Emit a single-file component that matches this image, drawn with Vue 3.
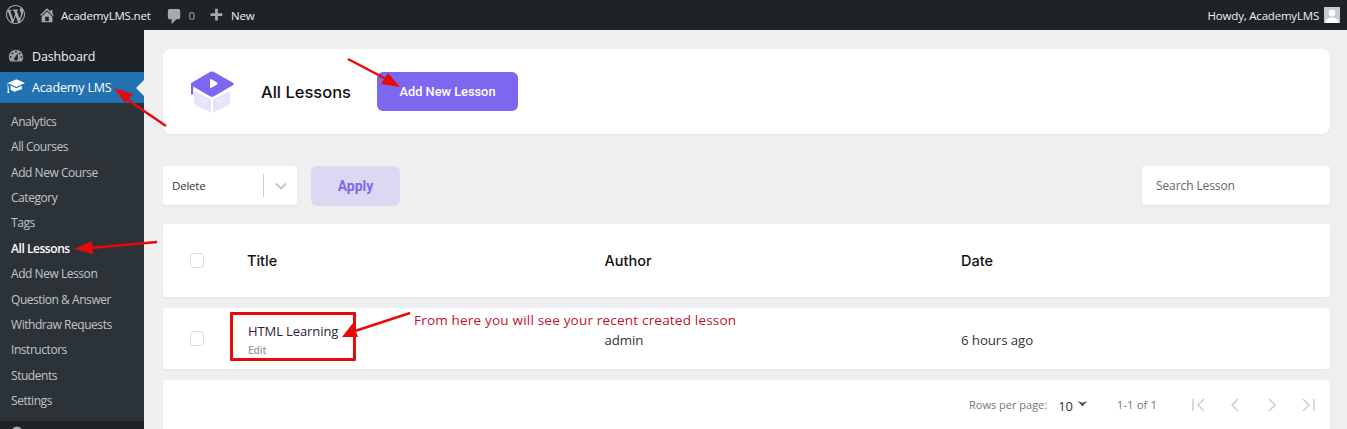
<script setup>
const subItems = [
  { label: 'Analytics' },
  { label: 'All Courses' },
  { label: 'Add New Course' },
  { label: 'Category' },
  { label: 'Tags' },
  { label: 'All Lessons', current: true },
  { label: 'Add New Lesson' },
  { label: 'Question & Answer' },
  { label: 'Withdraw Requests' },
  { label: 'Instructors' },
  { label: 'Students' },
  { label: 'Settings' }
]
</script>

<template>
  <div class="page">
    <header class="bar">
      <svg class="wp" viewBox="0 0 20 20"><path fill="#a7aaad" d="M20 10c0-5.51-4.49-10-10-10C4.48 0 0 4.49 0 10c0 5.52 4.48 10 10 10 5.51 0 10-4.48 10-10zM7.78 15.37L4.37 6.22c.55-.02 1.17-.08 1.17-.08.5-.06.44-1.13-.06-1.11 0 0-1.45.11-2.37.11-.18 0-.37 0-.58-.01C4.12 2.69 6.87 1.11 10 1.11c2.33 0 4.45.87 6.05 2.34-.68-.11-1.65.39-1.65 1.58 0 .74.45 1.36.9 2.1.35.61.55 1.36.55 2.46 0 1.49-1.4 5-1.4 5l-3.03-8.37c.54-.02.82-.17.82-.17.5-.05.44-1.25-.06-1.22 0 0-1.44.12-2.38.12-.87 0-2.33-.12-2.33-.12-.5-.03-.56 1.2-.06 1.22l.92.08 1.26 3.41zM17.41 10c.24-.64.74-1.87.43-4.25.7 1.29 1.05 2.71 1.05 4.25 0 3.29-1.73 6.24-4.4 7.78.97-2.59 1.94-5.2 2.92-7.78zM6.1 18.09C3.12 16.65 1.11 13.53 1.11 10c0-1.3.23-2.48.72-3.59C3.25 10.3 4.67 14.2 6.1 18.09zm4.03-6.63l2.58 6.98c-.86.29-1.76.45-2.71.45-.79 0-1.57-.11-2.29-.33.81-2.38 1.62-4.74 2.42-7.1z"/></svg>
      <svg class="home" viewBox="0 0 20 20"><path fill="#a7aaad" d="M16 8.5l1.53 1.53-1.06 1.06L10 4.62l-6.47 6.47-1.06-1.06L10 2.5l4 4v-2h2v4zm-6-2.46l6 5.99V18H4v-5.97zM12 17v-5H8v5h4z"/></svg>
      <span class="site">AcademyLMS.net</span>
      <svg class="bubble" viewBox="0 0 20 20"><path fill="#a7aaad" d="M5 2h9c1.1 0 2 .9 2 2v7c0 1.1-.9 2-2 2h-2l-5 5v-5H5c-1.100 0-2-.9-2-2V4c0-1.100.9-2 2-2z"/></svg>
      <span class="count">0</span>
      <svg class="plus" viewBox="0 0 20 20"><path fill="#a7aaad" d="M17 7v3h-5v5H9v-5H4V7h5V2h3v5h5z"/></svg>
      <span class="new">New</span>
      <span class="howdy">Howdy, AcademyLMS</span>
      <span class="avatar">
        <svg viewBox="0 0 16 16"><rect width="16" height="16" fill="#c9c9c9"/><circle cx="8" cy="6" r="3.4" fill="#fff"/><path fill="#fff" d="M1.500 16c.3-3.600 3-5.500 6.500-5.500s6.200 1.900 6.500 5.500z"/></svg>
      </span>
    </header>

    <div class="layout">
      <aside class="side">
        <div class="menu-row">
          <svg class="menu-icon" viewBox="0 0 20 20"><path fill="#9b9ea1" fill-rule="evenodd" d="M3.760 16h12.480c1.100-1.370 1.760-3.110 1.760-5 0-4.420-3.580-8-8-8s-8 3.580-8 8c0 1.890.66 3.630 1.760 5zM10 4c.55 0 1 .45 1 1s-.45 1-1 1-1-.45-1-1 .45-1 1-1zM6 6c.55 0 1 .45 1 1s-.45 1-1 1-1-.45-1-1 .45-1 1-1zm8 0c.55 0 1 .45 1 1s-.45 1-1 1-1-.45-1-1 .45-1 1-1zm-5.370 5.550L12 7v6c0 1.100-.9 2-2 2s-2-.9-2-2c0-.57.24-1.080.63-1.450zM4 10c.55 0 1 .45 1 1s-.45 1-1 1-1-.45-1-1 .45-1 1-1zm12 0c.55 0 1 .45 1 1s-.45 1-1 1-1-.45-1-1 .45-1 1-1z"/></svg>
          <span>Dashboard</span>
        </div>
        <div class="menu-row active">
          <svg class="menu-icon" viewBox="0 0 20 20"><path fill="#fff" d="M10.500 1.500 20 5.500 10.500 10 1.200 5.800V7.200L2.200 13.500 2.700 16.800H.300L.8 13.500 .7 5.500z"/><path fill="#fff" d="M4 8.300 10.500 11.300 16.500 8.500 16.500 12.500C14 13 11 14 8.500 15.500 7 14 5.500 13.500 4 13.200z"/></svg>
          <span>Academy LMS</span>
          <i class="notch"></i>
        </div>
        <nav class="sub">
          <a v-for="item in subItems" :key="item.label" :class="{ current: item.current }">{{ item.label }}</a>
        </nav>
        <svg class="next-icon" viewBox="0 0 12 12"><circle cx="6" cy="6" r="5.500" fill="#a7aaad"/></svg>
      </aside>

      <main class="main">
        <section class="card hero">
          <svg class="logo" viewBox="0 0 44 42">
            <path fill="#e6e2fc" d="M4 20 21 28.500V41.500L6 34.500Q4 33.500 4 31.500z"/>
            <path fill="#e6e2fc" d="M40 20 23 28.500V41.500L38 34.500Q40 33.500 40 31.500z"/>
            <path fill="#7c68ee" d="M20.500 .8Q22 0 23.500 .8L43 11.800Q44.500 13 43 14.200L23.500 25.500Q22 26.200 20.500 25.500L3.200 15.500V23.500H1V13.500Q.8 12.500 1.500 11.800z"/>
            <path fill="#fff" d="M20 9Q20 7.600 21.300 8.300L27 11.500Q28 12.500 27 13.500L21.300 16.700Q20 17.400 20 16z"/>
            <path stroke="#f4f2fe" stroke-width="1" d="M10 27 17 30.500M10 30 17 33.500M27 30.500 34 27M27 33.500 34 30"/>
          </svg>
          <h1>All Lessons</h1>
          <button class="primary">Add New Lesson</button>
        </section>

        <section class="tools">
          <div class="select">
            <span class="sel-label">Delete</span>
            <i class="sep"></i>
            <svg class="chev" viewBox="0 0 12 8"><path d="M1 1.500 6 6.500 11 1.500" fill="none" stroke="#c4c4c4" stroke-width="1.800"/></svg>
          </div>
          <button class="apply">Apply</button>
          <div class="search">Search Lesson</div>
        </section>

        <section class="card thead">
          <span class="check"></span>
          <span class="c-title">Title</span>
          <span class="c-author">Author</span>
          <span class="c-date">Date</span>
        </section>

        <section class="card trow">
          <span class="check"></span>
          <div class="c-title cell">
            <span class="lesson">HTML Learning</span>
            <span class="edit">Edit</span>
          </div>
          <span class="c-author val">admin</span>
          <span class="c-date val">6 hours ago</span>
        </section>

        <section class="card foot">
          <span class="rows">Rows per page:</span>
          <span class="num">10</span>
          <svg class="caret" viewBox="0 0 10 6"><path d="M0 0 5 5.500 10 0 5 1.800z" fill="#555"/></svg>
          <span class="range">1-1 of 1</span>
          <div class="pager">
            <svg viewBox="0 0 16 14"><path d="M2 1V13M13 1 7 7 13 13" fill="none" stroke="#d0d0d0" stroke-width="1.600"/></svg>
            <svg viewBox="0 0 16 14"><path d="M11 1 5 7 11 13" fill="none" stroke="#d0d0d0" stroke-width="1.600"/></svg>
            <svg viewBox="0 0 16 14"><path d="M5 1 11 7 5 13" fill="none" stroke="#d0d0d0" stroke-width="1.600"/></svg>
            <svg viewBox="0 0 16 14"><path d="M14 1V13M3 1 9 7 3 13" fill="none" stroke="#d0d0d0" stroke-width="1.600"/></svg>
          </div>
        </section>
      </main>
    </div>

    <div class="redbox"></div>
    <span class="note">From here you will see your recent created lesson</span>
    <svg class="arrows" viewBox="0 0 1347 429">
      <g fill="#e60a0a" stroke="#e60a0a">
        <path fill="none" stroke-width="2.500" d="M166 126 125 98"/>
        <path stroke="none" d="M114 88 133 94 125 103z"/>
        <path fill="none" stroke-width="2.500" d="M348 59 388 80"/>
        <path stroke="none" d="M400 87 381 84 388 73z"/>
        <path fill="none" stroke-width="2.500" d="M157 242 90 248"/>
        <path stroke="none" d="M74 249 92 241 93 254z"/>
        <path fill="none" stroke-width="2.500" d="M410 313 355 331"/>
        <path stroke="none" d="M342 337 353 323 358 337z"/>
      </g>
    </svg>
  </div>
</template>

<style>
html, body { margin: 0; background: #efeff1; }
</style>

<style scoped>
.page {
  position: relative;
  width: 1347px;
  height: 429px;
  overflow: hidden;
  background: #efeff1;
  font-family: "Open Sans", "Liberation Sans", sans-serif;
}
.bar {
  height: 30px;
  background: #1d2327;
  display: flex;
  align-items: center;
  padding: 0 6px;
  color: #f0f0f1;
  font-size: 11.500px;
  letter-spacing: -.2px;
}
.wp { width: 19px; height: 19px; margin-top: -1px; }
.home { width: 18px; height: 18px; margin-left: 13px; }
.site { margin-left: 5px; }
.bubble { width: 19px; height: 19px; margin-left: 14px; margin-top: 2px; }
.count { margin-left: 5px; color: #a7aaad; }
.plus { width: 18px; height: 18px; margin-left: 12px; margin-top: 2px; }
.new { margin-left: 6px; }
.howdy { margin-left: auto; }
.avatar { width: 16px; height: 16px; margin-left: 5px; margin-right: 1px; display: block; }
.avatar svg { display: block; width: 16px; height: 16px; }
.layout { display: flex; height: 399px; }
.side {
  width: 144px;
  flex: none;
  background: #1d2327;
  padding-top: 11px;
  box-sizing: border-box;
  display: flex;
  flex-direction: column;
}
.menu-row {
  height: 31px;
  flex: none;
  box-sizing: border-box;
  padding: 0 0 1px 7px;
  display: flex;
  align-items: center;
  color: #f0f0f1;
  font-size: 12.500px;
  position: relative;
  letter-spacing: -.15px;
}
.menu-row span { margin-left: 7px; }
.menu-icon { width: 18px; height: 18px; flex: none; }
.active { background: #2271b1; color: #fff; }
.notch {
  position: absolute;
  right: 0;
  top: 8px;
  border: 8px solid transparent;
  border-right-color: #efeff1;
  border-left-width: 0;
}
.sub {
  background: #2c3338;
  padding: 5.700px 0 0 11px;
  height: 318px;
  flex: none;
  box-sizing: border-box;
  display: flex;
  flex-direction: column;
}
.sub a {
  height: 25.400px;
  flex: none;
  display: flex;
  align-items: center;
  color: #c3c4c7;
  font-size: 12px;
  letter-spacing: -.45px;
  white-space: nowrap;
}
.sub a.current { color: #fff; font-weight: 600; }
.next-icon { width: 12px; height: 12px; flex: none; margin: 5px 0 0 11px; }
.main { flex: 1; padding: 19px 17px 0 19px; box-sizing: border-box; }
.card { background: #fff; box-shadow: 0 1px 2px rgba(0,0,0,.05); }
.hero {
  height: 85px;
  border-radius: 8px;
  display: flex;
  align-items: center;
  padding-left: 26px;
  box-sizing: border-box;
}
.logo { width: 44px; height: 42px; margin-left: 1px; flex: none; }
.hero h1 {
  margin: 0 0 0 27px;
  font-size: 16.500px;
  font-weight: 500;
  color: #111;
  letter-spacing: 0;
  font-family: Inter, "Open Sans", sans-serif;
}
.primary {
  margin-left: 26px;
  width: 141px;
  height: 39px;
  border: 0;
  border-radius: 6px;
  background: #7c68ee;
  color: #fff;
  font: 500 12.800px Roboto, sans-serif;
  padding: 0;
}
.tools { display: flex; align-items: flex-start; margin-top: 32px; height: 58px; }
.select {
  width: 134px;
  height: 39px;
  background: #fff;
  border-radius: 3px;
  display: flex;
  align-items: center;
  box-shadow: 0 1px 2px rgba(0,0,0,.05);
}
.sel-label { font-size: 11.500px; margin-left: 9px; color: #333; flex: 1; letter-spacing: -.2px; }
.sep { width: 1px; height: 23px; background: #ccc; }
.chev { width: 12px; height: 8px; margin: 0 10px 0 11px; }
.apply {
  margin-left: 14px;
  width: 89px;
  height: 40px;
  border: 0;
  border-radius: 6px;
  background: #dcd8f2;
  color: #7c68ee;
  font: 700 14px Roboto, sans-serif;
  padding: 0;
}
.search {
  margin-left: auto;
  width: 188px;
  height: 39px;
  background: #fff;
  border-radius: 3px;
  box-shadow: 0 1px 2px rgba(0,0,0,.05);
  display: flex;
  align-items: center;
  padding-left: 14px;
  box-sizing: border-box;
  font-size: 12px;
  color: #666;
  letter-spacing: -.1px;
}
.thead, .trow { display: flex; align-items: center; border-radius: 3px; position: relative; }
.thead { height: 73px; }
.trow { height: 61px; margin-top: 11px; }
.check {
  width: 12px;
  height: 13px;
  margin-left: 27px;
  border: 1px solid #dedede;
  border-radius: 3px;
  flex: none;
}
.c-title { margin-left: 44px; width: 356.500px; flex: none; font: 500 14.500px Inter, sans-serif; color: #111; }
.c-author { width: 356.500px; flex: none; font: 500 14.500px Inter, sans-serif; color: #111; }
.c-date { font: 500 14.500px Inter, sans-serif; color: #111; }
.thead .c-title { margin-left: 43px; width: 357.500px; }
.cell { display: flex; flex-direction: column; }
.lesson { font: 400 13px "Open Sans", sans-serif; color: #2b2440; letter-spacing: -.1px; line-height: 20px; }
.edit { font: 600 10px "Open Sans", sans-serif; color: #999; line-height: 14px; margin-top: 2px; }
.val { font: 400 13.300px "Open Sans", sans-serif; color: #333; letter-spacing: -.1px; padding-top: 2px; }
.foot {
  margin-top: 11px;
  height: 60px;
  border-radius: 3px 3px 0 0;
  display: flex;
  align-items: flex-start;
  padding-top: 18px;
  box-sizing: border-box;
  font-size: 11.500px;
  color: #777;
  letter-spacing: -.1px;
}
.rows { margin-left: 806px; line-height: 14px; font-size: 11px; letter-spacing: 0; }
.num { margin-left: 11px; font-size: 13px; color: #333; line-height: 16px; }
.caret { width: 11px; height: 6px; margin: 3px 0 0 4px; }
.range { margin-left: 29px; line-height: 14px; font-size: 11.500px; letter-spacing: 0; }
.pager { display: flex; gap: 20.500px; margin-left: 33.500px; }
.pager svg { width: 16px; height: 14px; display: block; }
.redbox {
  position: absolute;
  left: 230px;
  top: 312px;
  width: 126px;
  height: 49px;
  border: 3px solid #e60a0a;
  border-radius: 1px;
  box-sizing: border-box;
}
.note {
  position: absolute;
  left: 414px;
  top: 311px;
  font-size: 13.500px;
  line-height: 18px;
  color: #c8102e;
  letter-spacing: .2px;
  white-space: nowrap;
  font-family: "Open Sans", sans-serif;
}
.arrows { position: absolute; left: 0; top: 0; width: 1347px; height: 429px; pointer-events: none; }
</style>
